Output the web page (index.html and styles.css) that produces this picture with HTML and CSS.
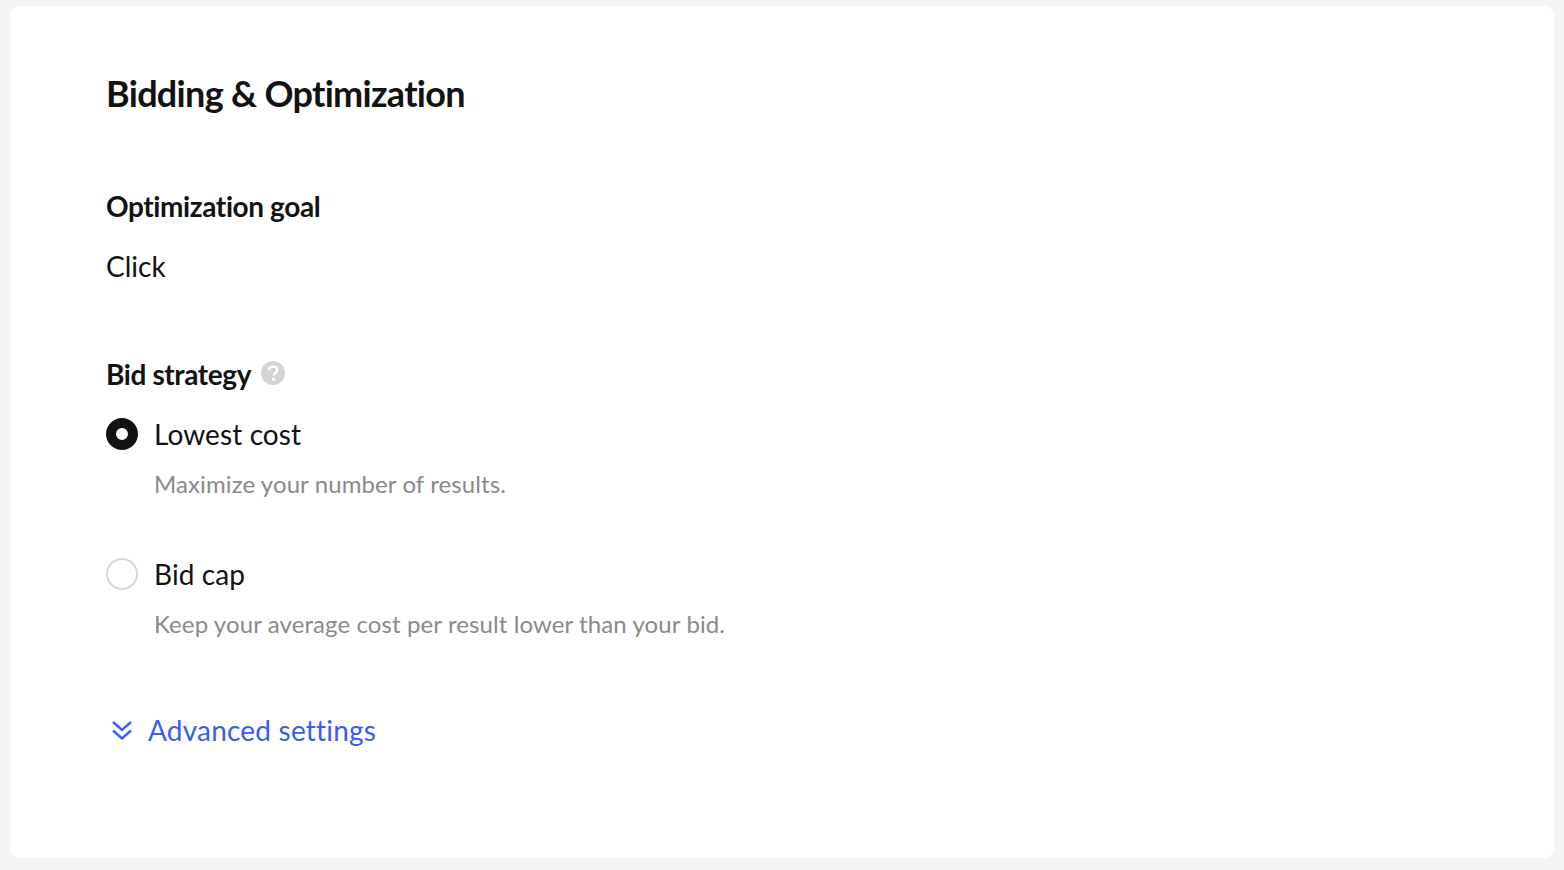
FILE: index.html
```html
<!DOCTYPE html>
<html lang="en">
<head>
<meta charset="utf-8">
<title>Bidding &amp; Optimization</title>
<link rel="stylesheet" href="styles.css">
</head>
<body>
<main class="card">
  <h1 class="title">Bidding &amp; Optimization</h1>
  <section class="goal">
    <h2 class="label">Optimization goal</h2>
    <p class="value">Click</p>
  </section>
  <section class="strategy">
    <h2 class="label label-help">Bid strategy
      <svg class="help" width="24" height="24" viewBox="0 0 24 24" aria-hidden="true">
        <circle cx="12" cy="12" r="12" fill="#d4d4d4"/>
        <path d="M7.800 9.400c.2-2.400 1.900-3.800 4.300-3.800 2.500 0 4.100 1.400 4.100 3.400 0 1.600-.9 2.400-2 3.200-1 .7-1.400 1.200-1.400 2.400" fill="none" stroke="#fff" stroke-width="2.400"/>
        <circle cx="12.600" cy="18.200" r="1.600" fill="#fff"/>
      </svg>
    </h2>
    <div class="option">
      <span class="radio radio-on"></span>
      <div class="option-text">
        <div class="option-name">Lowest cost</div>
        <div class="option-desc">Maximize your number of results.</div>
      </div>
    </div>
    <div class="option">
      <span class="radio"></span>
      <div class="option-text">
        <div class="option-name">Bid cap</div>
        <div class="option-desc">Keep your average cost per result lower than your bid.</div>
      </div>
    </div>
  </section>
  <a class="advanced" href="#">
    <svg class="chevrons" width="20" height="20" viewBox="0 0 20 20" aria-hidden="true">
      <path d="M1 2l9 8 9-8M1 10.500l9 8 9-8" fill="none" stroke="#3a5bf5" stroke-width="2.400"/>
    </svg>
    Advanced settings
  </a>
</main>
</body>
</html>
```
FILE: styles.css
```css
* { box-sizing: border-box; }
html, body { height: 100%; }
body {
  margin: 0;
  padding: 6px 10px 12px;
  background: #f5f5f5;
  font-family: "Lato", "Liberation Sans", sans-serif;
  font-variant-ligatures: none;
  color: #161823;
  overflow: hidden;
}
.card {
  height: 852px;
  background: #fff;
  border-radius: 10px;
  padding: 64px 96px 0;
}
.title {
  margin: 0;
  font-size: 36px;
  line-height: 46px;
  font-weight: 700;
  letter-spacing: -0.7px;
  color: #121212;
}
.goal { margin-top: 72px; }
.label {
  margin: 0;
  font-size: 28px;
  line-height: 36px;
  font-weight: 700;
  letter-spacing: -0.4px;
  color: #121212;
}
.value {
  margin: 24px 0 0;
  font-size: 28px;
  line-height: 36px;
  color: #121212;
}
.strategy { margin-top: 72px; }
.label-help { display: flex; align-items: center; gap: 10px; }
.help { flex: none; margin-top: -2px; }
.option { display: flex; gap: 16px; margin-top: 24px; }
.option + .option { margin-top: 55px; }
.radio {
  flex: none;
  width: 32px;
  height: 32px;
  margin-top: 2px;
  border-radius: 50%;
  border: 2px solid #d6d6d6;
}
.radio-on { border: 10px solid #121212; }
.option-name { font-size: 28px; line-height: 36px; letter-spacing: 0.1px; color: #121212; }
.option-desc { margin-top: 15px; font-size: 24px; line-height: 34px; letter-spacing: 0.1px; color: #8a8a8a; }
.advanced {
  display: flex;
  align-items: center;
  gap: 16px;
  margin: 71px 0 0 6px;
  font-size: 28px;
  line-height: 36px;
  letter-spacing: 0.2px;
  color: #3a5bf5;
  text-decoration: none;
}
.chevrons { flex: none; }
```
